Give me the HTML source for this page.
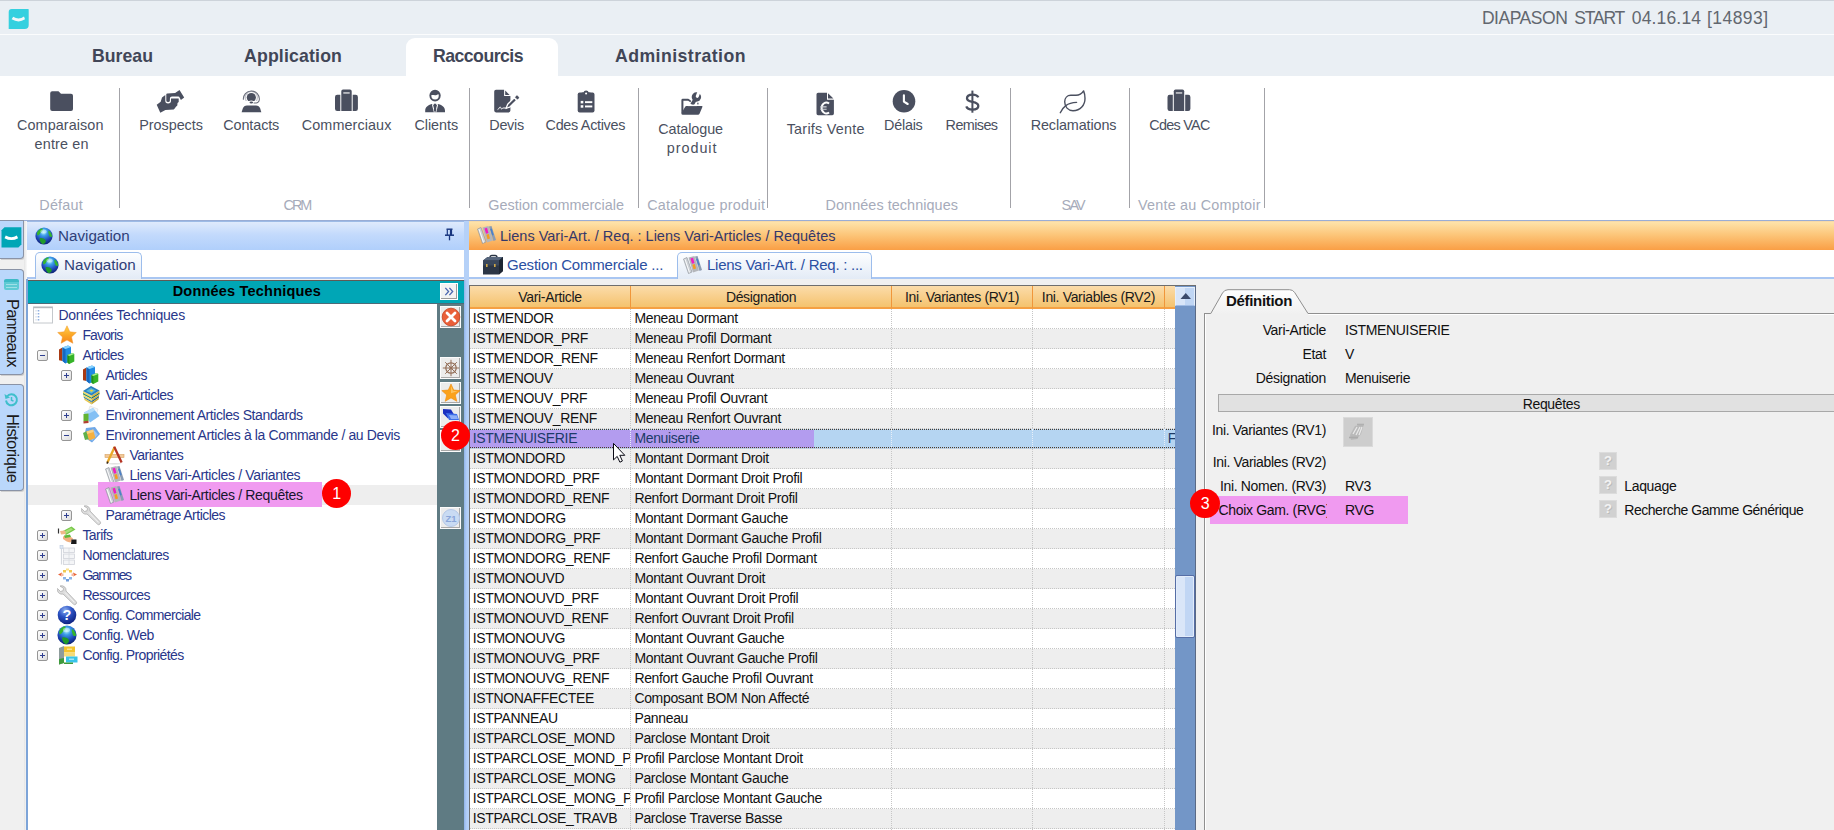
<!DOCTYPE html>
<html><head><meta charset="utf-8"><title>DIAPASON</title>
<style>
html,body{margin:0;padding:0;background:#f0f0f0;}
body{font-family:"Liberation Sans",sans-serif;}
#app{position:relative;width:1834px;height:830px;overflow:hidden;background:#f0f0f0;}
#app *{box-sizing:border-box;}
.abs{position:absolute;}
.t{position:absolute;white-space:nowrap;line-height:1;}
/* top */
.titlebar{left:0;top:0;width:1834px;height:35px;background:#eaeff4;border-top:1px solid #cdd3da;}
.wline{left:0;top:34px;width:1834px;height:1px;background:#fbfcfd;}
.tabbar{left:0;top:35px;width:1834px;height:41px;background:#eaeff4;}
.acttab{left:406px;top:38px;width:152px;height:38px;background:#fff;border-radius:9px 9px 0 0;}
.rtab{font-size:17.7px;font-weight:bold;color:#414657;top:47.600px;}
.apptitle{font-size:17.5px;color:#62676f;top:10px;}
.ribbon{left:0;top:76px;width:1834px;height:144px;background:#fff;}
.rline{left:0;top:220px;width:1834px;height:1px;background:#9aadd5;}
.rlab{font-size:14.4px;color:#4a5060;text-align:center;transform:translateX(-50%);line-height:19px;white-space:nowrap;}
.glab{font-size:14.4px;color:#a6abba;transform:translateX(-50%);top:198px;}
.sep{width:1px;background:#a3a3a8;top:88px;height:120px;}
.ico{position:absolute;}
/* left */
.sidetab{left:0;width:24px;background:#bad7fb;border:1px solid #8a93a6;border-left:none;border-radius:0 4px 4px 0;box-shadow:1px 1px 0 #d0d0d0;}
.vtext{position:absolute;white-space:nowrap;font-size:16.5px;color:#1a1a1a;transform-origin:0 0;transform:rotate(90deg);line-height:1;}
.navtitle{left:27px;top:221px;width:437px;height:29px;background:linear-gradient(#dfeafc,#c3dafc 45%,#b0cffb);border-top:1px solid #9dbbe6;}
.navtabs{left:27px;top:250px;width:437px;height:29px;background:#fff;border-bottom:2px solid #a9c6f2;}
.ntab{border:1px solid #9cbdec;border-bottom:none;border-radius:5px 5px 0 0;background:linear-gradient(#fdfeff,#e3ebf6);}
.hdrtxt{font-size:15.2px;color:#2f3f78;}
.teal{left:28px;top:280px;width:436px;height:24px;background:#00a6b6;border-top:1px solid #5f5a55;border-bottom:1px solid #4d6b78;}
.tree{left:28px;top:304px;width:409px;height:526px;background:#fff;}
.tbar{left:437px;top:304px;width:27px;height:526px;background:#5f7b83;}
.tb{left:440px;width:21px;height:22px;background:#ececec;border:1px solid #fbfbfb;box-shadow:inset -1px -1px 0 #a9a9a9;}
.nvb{background:#7da4d8;}
.ti{font-size:14px;letter-spacing:-0.34px;color:#28368a;}
.exp{width:11px;height:11px;border:1px solid #969696;background:linear-gradient(135deg,#fff,#dcdcdc);border-radius:2px;}
.exp:before{content:"";position:absolute;left:2px;top:4px;width:5px;height:1px;background:#2f3f90;}
.exp.p:after{content:"";position:absolute;left:4px;top:2px;width:1px;height:5px;background:#2f3f90;}
/* grid */
.gtitle{left:469px;top:221px;width:1365px;height:29px;background:linear-gradient(#fee3aa,#fcc67a 45%,#fa9f45);border-top:1px solid #f7d9a6;}
.gtabs{left:469px;top:250px;width:1368px;height:29px;background:#fff;border-bottom:2px solid #a9c6f2;}
.gt{font-size:15px;color:#2b4fa2;}
.grid{left:469px;top:285px;width:727px;height:545px;background:#fff;border-left:1px solid #6e6e6e;border-top:1px solid #6e6e6e;}
.gh{top:286px;height:23px;background:linear-gradient(#fbdcaa,#f8cf8c 50%,#f4c36e);border-right:1px solid #f0963a;border-bottom:2px solid #f5a043;font-size:14px;letter-spacing:-0.34px;color:#1a1a1a;text-align:center;line-height:23px;white-space:nowrap;overflow:hidden;}
.row{left:470px;width:705px;height:20px;border-bottom:1px dotted #c6c6c6;}
.row.g{background:#eeeeee;}
.c{position:absolute;top:0;height:19px;font-size:14px;letter-spacing:-0.34px;color:#111;line-height:19px;white-space:nowrap;overflow:hidden;padding-left:2.7px;border-right:1px dotted #c6c6c6;}
.c.c1{padding-left:3.4px;}
.row.sel{background:#b5d5f2;border-top:1px dotted #4a3c30;height:20px;}
.row.sel:after{content:"";position:absolute;left:0;top:17px;width:100%;height:0;border-top:1px dotted #4a3c30;}
.row.sel .c{top:-1px;color:#1c3a68;height:18px;}
.vsb{left:1175px;top:286px;width:21px;height:544px;background:#7396c7;border-right:1px solid #5a6a86;}
/* right */
.rp{left:1197px;top:279px;width:637px;height:551px;background:#f0f0f0;}
.fl{font-size:14px;letter-spacing:-0.34px;color:#111;}
.q{left:1599px;width:18px;height:18px;background:#d1d1d1;border:1px solid #dcdcdc;color:#f3f3f3;font-size:13px;text-align:center;line-height:16px;font-weight:bold;text-shadow:1px 1px 0 #bcbcbc;}
.red{border-radius:50%;background:#fe0000;color:#fff;text-align:center;font-size:16px;}

.rl{font-size:14.4px;color:#4a5060;}
.gl{font-size:14.4px;color:#a6abba;}

.row.sel .c:first-of-type{border-right-color:#e8a0f0;}

.row.sel .c{border-right-color:#e6eef8;}
.row.sel .c:first-of-type{border-right-color:#e8a0f0;}

</style></head>
<body>
<div id="app">
<div class="abs titlebar"></div><div class="abs tabbar"></div><div class="abs wline"></div>
<svg class="ico" style="left:8px;top:8px" width="22" height="22" viewBox="8 8 22 22"><path d="M11.700 8.900H28.200Q28.700 8.900 28.700 9.400V24.900Q28.700 28.900 24.700 28.900H8.700V11.900Q8.700 8.900 11.700 8.900Z" fill="#35d0df"/><path d="M13.200 16.800Q18.800 20.200 24 16.600L25 19.300Q18.800 23.500 11.600 19.300Z" fill="#f3f6f8"/></svg>
<div class="t apptitle" style="left:1481.9px;letter-spacing:-0.463px">DIAPASON</div>
<div class="t apptitle" style="left:1574.3px;letter-spacing:-1.213px">START</div>
<div class="t apptitle" style="left:1631.8px;letter-spacing:0.154px">04.16.14</div>
<div class="t apptitle" style="left:1707px;letter-spacing:0.435px">[14893]</div>
<div class="abs acttab"></div>
<div class="t rtab" style="left:92px;letter-spacing:0px">Bureau</div>
<div class="t rtab" style="left:244px;letter-spacing:0.16px">Application</div>
<div class="t rtab" style="left:433px;letter-spacing:-0.54px">Raccourcis</div>
<div class="t rtab" style="left:615px;letter-spacing:0.44px">Administration</div>
<div class="abs ribbon"></div><div class="abs rline"></div>
<div class="abs sep" style="left:119px"></div>
<div class="abs sep" style="left:469px"></div>
<div class="abs sep" style="left:638px"></div>
<div class="abs sep" style="left:767px"></div>
<div class="abs sep" style="left:1010px"></div>
<div class="abs sep" style="left:1129px"></div>
<div class="abs sep" style="left:1264px"></div>
<svg class="ico" style="left:0;top:76px" width="1834" height="143" viewBox="0 76 1834 143"><path fill="#4a4f5f" d="M52.200 91.300h6.300l2.500 2.500h10a2 2 0 0 1 2 2v13.300a2 2 0 0 1-2 2h-18.800a2 2 0 0 1-2-2v-15.800a2 2 0 0 1 2-2z"/>
<g fill="#4a4f5f"><path d="M166.300 94.300 Q166.300 93.500 167.300 93.400 L175.100 92.900 L179.500 90 L184.200 97.600 L180.900 99.900 L179.700 97.700 Q179.300 96.600 178.200 96.600 L172 96.600 Q169.900 96.600 169.900 98.600 L169.900 100.600 Q169.900 102.100 168.100 102.100 Q166.300 102.100 166.300 100.600 Z"/>
<path d="M156.700 104.800 L160.700 101.800 L162 97.600 L165.300 95 L165.300 100.800 Q165.300 103.400 168.100 103.400 Q171 103.400 171 100.800 L171 98.400 L178.700 98.500 L178.700 101.900 L177.500 103 L177.300 105.500 L175.700 106.900 L175.100 108 L173.700 109.500 L165.400 109.900 L160.300 112.700 Z"/></g>
<clipPath id="cc"><rect x="240" y="88" width="24" height="12.900"/></clipPath>
<circle cx="251.300" cy="97.500" r="6.100" fill="none" stroke="#c6c8cf" stroke-width="1.300" clip-path="url(#cc)"/>
<path d="M243.400 99.800 A8 8 0 1 1 259.300 99.800 C259.300 102.300 257 103.200 253.600 103" fill="none" stroke="#686c7a" stroke-width="1.050"/>
<circle cx="251.300" cy="97.500" r="4.600" fill="#4a4f5f" clip-path="url(#cc)"/>
<path d="M248.600 101.300 Q251.300 99.700 254 101.300 L254 101.500 L248.600 101.500Z" fill="#fff"/>
<ellipse cx="251.300" cy="102.600" rx="1.800" ry="1" fill="#4a4f5f"/>
<path fill="#4a4f5f" d="M241.600 112.300 L242.800 108.600 Q243.800 105.600 247 105.600 H256 Q259.200 105.600 260.200 108.600 L261.300 112.300 Z"/>
<g fill="#4a4f5f">
<path d="M341.3 111 V91.2 a1.700 1.700 0 0 1 1.700-1.700 h7 a1.700 1.700 0 0 1 1.700 1.700 V111z"/>
<path d="M337.2 94.700 H340.3 V111 H337.2 a2.200 2.200 0 0 1-2.200-2.200 V96.900 a2.200 2.200 0 0 1 2.200-2.200z"/>
<path d="M355.7 94.700 H352.7 V111 H355.7 a2.200 2.200 0 0 0 2.200-2.200 V96.900 a2.200 2.200 0 0 0-2.200-2.200z"/>
</g><rect x="343.3" y="92.300" width="6.400" height="1.300" fill="#fff" opacity=".85"/>
<clipPath id="hc"><ellipse cx="435.050" cy="95.600" rx="4.700" ry="4.850"/></clipPath>
<path clip-path="url(#hc)" fill="#4a4f5f" d="M429 88 H441 V95.400 C439.600 93.900 438 94.100 436.600 94.900 C434.800 95.800 432.600 94.400 431 95.300 L429 96 Z"/>
<ellipse cx="435.050" cy="95.600" rx="4.700" ry="4.850" fill="none" stroke="#4a4f5f" stroke-width="1.950"/>
<path fill="#4a4f5f" d="M425.200 112.300 v-1.600 c0-3.400 2.800-5.600 6.400-6.600 l2.400 1 h2.100 l2.400-1 c3.600 1 6.500 3.200 6.500 6.600 v1.600z"/>
<path d="M432.400 104.300 l2 8 M437.700 104.300 l-2 8" stroke="#fff" stroke-width="1.050" fill="none"/>
<path d="M433.900 103.800 h2.300 v1.300 l-0.500 0.600 0.600 4.200 -1.250 2.400 -1.250-2.400 0.600-4.200 -0.500-0.600z" fill="#4a4f5f"/>
<path fill="#4a4f5f" d="M496 89.800 h8.100 v6.300 h6.300 v14.500 a1.800 1.800 0 0 1-1.800 1.800 h-12.600 a1.800 1.800 0 0 1-1.800-1.800 v-19 a1.800 1.800 0 0 1 1.800-1.800z"/>
<path fill="#4a4f5f" d="M505.200 90.500 l4.400 4.500 h-4.400z"/>
<path d="M497.600 109.600 c1.300-0.200 1.600-2.600 2.500-2.600 s0.700 1.900 1.400 1.900 0.900-0.900 1.600-0.900 h2.800" stroke="#fff" stroke-width="1" fill="none"/>
<path d="M506 108.500 L507.690 104.330 L514.260 97.760 L516.740 100.240 L510.170 106.810 Z" fill="#4a4f5f" stroke="#fff" stroke-width="1.300" stroke-linejoin="round"/>
<path d="M514.830 97.190 L516.400 95.600 a0.800 0.800 0 0 1 1.100 0 L519 97.100 a0.800 0.800 0 0 1 0 1.100 L517.310 99.670 Z" fill="#4a4f5f" stroke="#fff" stroke-width=".4"/>
<rect x="577.700" y="92.500" width="16.800" height="20" rx="1.900" fill="#4a4f5f"/>
<path fill="#4a4f5f" d="M581.800 94.500 v-2 h1.600 a2.800 2.800 0 0 1 5.400 0 h1.600 v2z"/>
<circle cx="586.100" cy="93.500" r="1.050" fill="#fff"/>
<g fill="#fff"><rect x="580.700" y="100.900" width="2.600" height="2.500"/><rect x="585" y="101.200" width="7.300" height="1.900"/><rect x="580.700" y="105.200" width="2.600" height="2.500"/><rect x="585" y="105.500" width="7.300" height="1.900"/></g>
<path fill="#4a4f5f" d="M681.400 113.300 V100.200 a1.400 1.400 0 0 1 1.400-1.400 h5.400 q0.500 0 0.900 0.350 l2 1.700 v1.900 l-3-1.950 h-4.700 v10.400 l-2 2.300z"/>
<path fill="#4a4f5f" d="M686.300 106.100 h15.500 q1 0 0.600 0.900 l-3 7 q-0.400 0.800-1.300 0.800 h-15.300 q-1.400 0-1.400-1.500 l3.800-6.500 q0.400-0.700 1.100-0.700z"/>
<path d="M695.500 98.800 L692.100 104.600" stroke="#fff" stroke-width="5.200" fill="none"/>
<path d="M695.500 98.800 L692 104.700" stroke="#4a4f5f" stroke-width="3.700" fill="none"/>
<rect x="688" y="104.600" width="9" height="1.500" fill="#fff"/>
<circle cx="696.400" cy="97" r="4.700" fill="#4a4f5f"/>
<path d="M697.300 96.300 L699.600 90.300" stroke="#fff" stroke-width="3.100" stroke-linecap="round" fill="none"/>
<rect x="697" y="102.700" width="1.700" height="1.700" fill="#7d818d"/>
<path fill="#4a4f5f" d="M818.100 92.700 h8.900 v7 h6.900 v13.900 a1.600 1.600 0 0 1-1.600 1.600 h-14.200 a1.600 1.600 0 0 1-1.600-1.600 v-19.300 a1.600 1.600 0 0 1 1.600-1.600z"/>
<path fill="#4a4f5f" d="M828 93.200 l5.400 5.400 h-5.400z"/>
<path d="M829.100 103.600 C827.600 102.500 825.600 102.300 824.100 103.300 C822.100 104.600 821.600 106.500 821.600 108.050 C821.600 109.600 822.100 111.500 824.100 112.800 C825.600 113.800 827.600 113.600 829.100 112.500" fill="none" stroke="#fff" stroke-width="1.900"/><path d="M820.400 106.900 h6.200 M820.400 109.300 h6.200" stroke="#d4d6db" stroke-width="1.100"/>
<circle cx="904" cy="101.200" r="11.300" fill="#4a4f5f"/><path d="M903.900 95.300 V101.600 L907.700 104" stroke="#fff" stroke-width="2.100" fill="none" stroke-linecap="round" stroke-linejoin="round"/>
<g fill="none" stroke="#4a4f5f"><path stroke-width="2.300" d="M978.300 97.400 C977.500 95.400 975.300 94.600 972.500 94.600 C969.300 94.600 967 96 967 98.300 C967 100.600 969 101.300 972.400 101.900 C976 102.500 978.300 103.400 978.300 106 C978.300 108.300 976 109.600 972.500 109.600 C969.300 109.600 967 108.600 966.300 106.400"/><path stroke-width="2" d="M972.400 90.600 V112.700"/></g>
<g fill="none" stroke="#4a4f5f" stroke-width="1.400" stroke-linecap="round" stroke-linejoin="round"><path d="M1083.600 90.900 C1082 93.500 1079.500 95.300 1076 95.300 L1070.800 95.300 C1067.200 95.300 1064.700 98 1064.700 101.800 C1064.700 106.800 1068 110.700 1073 110.700 C1080.500 110.700 1085 105 1085 98.500 C1085 95.500 1084.500 93 1083.600 90.900 Z"/><path d="M1060.300 112.700 C1061.800 109.500 1063.500 107.300 1065.800 105.600 C1068.500 103.600 1071.500 102.600 1076.600 102.400"/></g>
<g fill="#4a4f5f">
<path d="M1173.8 111 V91.2 a1.700 1.700 0 0 1 1.700-1.700 h7 a1.700 1.700 0 0 1 1.700 1.700 V111z"/>
<path d="M1169.7 94.700 H1172.8 V111 H1169.7 a2.200 2.200 0 0 1-2.200-2.200 V96.900 a2.200 2.200 0 0 1 2.200-2.200z"/>
<path d="M1188.2 94.700 H1185.2 V111 H1188.2 a2.200 2.200 0 0 0 2.200-2.200 V96.900 a2.200 2.200 0 0 0-2.200-2.200z"/>
</g><rect x="1175.8" y="92.300" width="6.400" height="1.300" fill="#fff" opacity=".85"/></svg>
<div class="t rl" style="left:17px;top:118px;letter-spacing:0.081px">Comparaison</div>
<div class="t rl" style="left:34.6px;top:137px;letter-spacing:0.155px">entre en</div>
<div class="t rl" style="left:139.3px;top:118px;letter-spacing:-0.05px">Prospects</div>
<div class="t rl" style="left:223.3px;top:118px;letter-spacing:-0.114px">Contacts</div>
<div class="t rl" style="left:301.8px;top:118px;letter-spacing:0.083px">Commerciaux</div>
<div class="t rl" style="left:414.4px;top:118px;letter-spacing:-0.05px">Clients</div>
<div class="t rl" style="left:489.3px;top:118px;letter-spacing:-0.296px">Devis</div>
<div class="t rl" style="left:545.6px;top:118px;letter-spacing:-0.308px">Cdes Actives</div>
<div class="t rl" style="left:658.2px;top:122px;letter-spacing:-0.089px">Catalogue</div>
<div class="t rl" style="left:666.8px;top:141px;letter-spacing:0.947px">produit</div>
<div class="t rl" style="left:786.7px;top:122px;letter-spacing:0.236px">Tarifs Vente</div>
<div class="t rl" style="left:884.1px;top:118px;letter-spacing:-0.26px">Délais</div>
<div class="t rl" style="left:945.6px;top:118px;letter-spacing:-0.597px">Remises</div>
<div class="t rl" style="left:1030.7px;top:118px;letter-spacing:-0.126px">Reclamations</div>
<div class="t rl" style="left:1149.3px;top:118px;letter-spacing:-0.732px">Cdes VAC</div>
<div class="t gl" style="left:39.3px;top:198px;letter-spacing:0.199px">Défaut</div>
<div class="t gl" style="left:283.5px;top:198px;letter-spacing:-1.991px">CRM</div>
<div class="t gl" style="left:488.3px;top:198px;letter-spacing:0.035px">Gestion commerciale</div>
<div class="t gl" style="left:647.2px;top:198px;letter-spacing:0.262px">Catalogue produit</div>
<div class="t gl" style="left:825.6px;top:198px;letter-spacing:0.064px">Données techniques</div>
<div class="t gl" style="left:1061.6px;top:198px;letter-spacing:-1.817px">SAV</div>
<div class="t gl" style="left:1138px;top:198px;letter-spacing:0.206px">Vente au Comptoir</div>
<div class="abs sidetab" style="top:220px;height:39px;border-radius:0 0 4px 0"></div>
<svg class="ico" style="left:1px;top:227px" width="21" height="21" viewBox="1 227 21 21"><path d="M4.500 227.300H21.400V244.500L18.400 247.500H1.500V230.300Z" fill="#00a6b6"/><path d="M5.800 235.600Q11.500 238.800 16.800 235.500L18.100 238.200Q11.500 242 4.500 238.200Z" fill="#fff"/></svg>
<div class="abs sidetab" style="top:269px;height:106px"></div>
<div class="abs" style="left:4px;top:279px;width:15px;height:11px;background:#5fcad4;border-radius:2px;border-top:3px solid #3dbac6"></div><div class="abs" style="left:6px;top:284px;width:11px;height:1px;background:#9fe0e6;box-shadow:0 3px 0 #9fe0e6"></div>
<div class="vtext" style="left:20.700px;top:298.500px;letter-spacing:-0.833px">Panneaux</div>
<div class="abs sidetab" style="top:384px;height:107px"></div>
<svg class="ico" style="left:4px;top:392px" width="15" height="15" viewBox="0 0 15 15"><path d="M3 4.500a5.500 5.500 0 1 1-1 4" fill="none" stroke="#3fbfcc" stroke-width="2"/><path d="M0.500 2l1 5 4.500-1.500z" fill="#3fbfcc"/><path d="M7.500 5v3.200l2 1" stroke="#3fbfcc" stroke-width="1.500" fill="none"/></svg>
<div class="vtext" style="left:20.700px;top:413.500px;letter-spacing:-0.589px">Historique</div>
<div class="abs" style="left:24px;top:221px;width:3px;height:609px;background:linear-gradient(90deg,#e4e4e4,#fafafa)"></div><div class="abs nvb" style="left:26px;top:279px;width:2px;height:551px"></div>
<div class="abs navtitle"></div>
<svg class="ico" style="left:35px;top:227px" width="18" height="18" viewBox="0 0 18 18"><defs><radialGradient id="gg1" cx="48%" cy="28%" r="72%"><stop offset="0" stop-color="#b8f4ff"/><stop offset=".3" stop-color="#3a9be8"/><stop offset=".7" stop-color="#1d43b4"/><stop offset="1" stop-color="#0b1f6c"/></radialGradient></defs><circle cx="9" cy="9" r="8.600" fill="url(#gg1)"/><path d="M1.800 6.500 C2.500 3.500 5 1.500 7.500 1.200 C8 3 7.500 4 6 5 C5 6.500 4.500 8 2.500 8.500 Z" fill="#35b52e"/><path d="M13.500 3.500 C15.500 4.500 17 7 17.200 9.500 C16 10.500 14.500 10 14 8 C13.500 6.500 13 5 13.500 3.500Z" fill="#35b52e"/><path d="M4.500 11.500 C6.500 10.500 9 11.500 10.500 13 C11.500 14.500 10 16.500 8 17.300 C6 16.500 4.500 14 4.500 11.500Z" fill="#1f9a2a"/><ellipse cx="8.500" cy="4.500" rx="3.200" ry="2" fill="#e8ffff" opacity=".45"/></svg>
<div class="t hdrtxt" style="left:58px;top:228px">Navigation</div>
<svg class="ico" style="left:444px;top:228px" width="11" height="13" viewBox="0 0 11 13"><path d="M2.500 1.200h6" stroke="#17357f" stroke-width="1.400"/><path d="M3.300 1.500v5.500" stroke="#17357f" stroke-width="1.200"/><path d="M7 1.500v5.500" stroke="#17357f" stroke-width="2.200"/><path d="M1 7.200h9" stroke="#17357f" stroke-width="1.500"/><path d="M5.500 8v4.300" stroke="#17357f" stroke-width="1.300"/></svg>
<div class="abs navtabs"></div>
<div class="abs ntab" style="left:35px;top:252px;width:107px;height:27px"></div>
<svg class="ico" style="left:41px;top:256px" width="18" height="18" viewBox="0 0 18 18"><defs><radialGradient id="gg2" cx="48%" cy="28%" r="72%"><stop offset="0" stop-color="#b8f4ff"/><stop offset=".3" stop-color="#3a9be8"/><stop offset=".7" stop-color="#1d43b4"/><stop offset="1" stop-color="#0b1f6c"/></radialGradient></defs><circle cx="9" cy="9" r="8.600" fill="url(#gg2)"/><path d="M1.800 6.500 C2.500 3.500 5 1.500 7.500 1.200 C8 3 7.500 4 6 5 C5 6.500 4.500 8 2.500 8.500 Z" fill="#35b52e"/><path d="M13.500 3.500 C15.500 4.500 17 7 17.200 9.500 C16 10.500 14.500 10 14 8 C13.500 6.500 13 5 13.500 3.500Z" fill="#35b52e"/><path d="M4.500 11.500 C6.500 10.500 9 11.500 10.500 13 C11.500 14.500 10 16.500 8 17.300 C6 16.500 4.500 14 4.500 11.500Z" fill="#1f9a2a"/><ellipse cx="8.500" cy="4.500" rx="3.200" ry="2" fill="#e8ffff" opacity=".45"/></svg>
<div class="t hdrtxt" style="left:64px;top:257px">Navigation</div>
<div class="abs teal"></div>
<div class="t" style="left:172.700px;top:284px;font-weight:bold;font-size:14.500px;color:#000;letter-spacing:0.202px">Données Techniques</div>
<div class="abs" style="left:440px;top:283px;width:18px;height:17px;background:#f2f2f2;border:1px solid #fff;box-shadow:inset -1px -1px 0 #9a9a9a"></div>
<svg class="ico" style="left:444px;top:287px" width="10" height="9" viewBox="0 0 12 11"><path d="M1.500 1l4 4.500-4 4.500M6.500 1l4 4.500-4 4.500" stroke="#4a66b0" stroke-width="1.600" fill="none"/></svg>
<div class="abs tree"></div><div class="abs tbar"></div>
<div class="abs" style="left:464px;top:221px;width:5px;height:609px;background:#b5d1f8"></div><div class="abs" style="left:464px;top:280px;width:5px;height:550px;background:linear-gradient(90deg,#8fb3e8,#aecbf5 45%,#b8d4f9)"></div>
<svg class="ico" style="left:33px;top:306px" width="20" height="18" viewBox="0 0 20 18"><rect x=".5" y="1" width="19" height="16" fill="#fff" stroke="#c4c8cc"/><path d="M.5 1.500h19" stroke="#b4b8bc" stroke-width="1.400"/><path d="M5.500 4v11" stroke="#8fb0e0" stroke-width="1.600" stroke-dasharray="1.600 1.400"/><path d="M3 4v11" stroke="#d0d8e4" stroke-width="1" stroke-dasharray="1.600 1.400"/></svg>
<div class="t ti" style="left:58.4px;top:307.5px;letter-spacing:-0.219px">Données Techniques</div>
<svg class="ico" style="left:57px;top:325px" width="20" height="20" viewBox="0 0 20 20"><defs><linearGradient id="sg" x1="0" y1="0" x2="0" y2="1"><stop offset="0" stop-color="#ffd24a"/><stop offset=".55" stop-color="#fba524"/><stop offset="1" stop-color="#f5841a"/></linearGradient></defs><path d="M10 0.800l2.800 6 6.500 0.700-4.800 4.400 1.400 6.400-5.900-3.300-5.900 3.300 1.400-6.400-4.800-4.400 6.500-0.700z" fill="url(#sg)" stroke="#f0952a" stroke-width=".5"/></svg>
<div class="t ti" style="left:82.4px;top:327.5px;letter-spacing:-0.851px">Favoris</div>
<div class="abs exp " style="left:37px;top:350px"></div>
<svg class="ico" style="left:57px;top:345px" width="20" height="20" viewBox="0 0 20 20"><path d="M2 4.500L5.500 2.500V16L2 15.200z" fill="#a83a14"/><path d="M5.500 2.500L11 0.500L14 2V15.500L8.500 18.500L5.500 16z" fill="#1f8ae4"/><path d="M5.500 2.500L8.500 4V18.500L5.500 16z" fill="#1568c0"/><path d="M5.500 2.500L11 0.500L14 2L8.500 4z" fill="#8ad4ff"/><path d="M10.500 10L15.500 8L17.300 9V16.500L12.300 19L10.500 17.800z" fill="#36b428"/><path d="M10.500 10L12.300 11V19L10.500 17.800z" fill="#23901c"/><path d="M10.500 10L15.500 8L17.300 9L12.300 11z" fill="#a4ec92"/></svg>
<div class="t ti" style="left:82.4px;top:347.5px;letter-spacing:-0.615px">Articles</div>
<div class="abs exp p" style="left:61px;top:370px"></div>
<svg class="ico" style="left:81px;top:365px" width="20" height="20" viewBox="0 0 20 20"><path d="M2 4.500L5.500 2.500V16L2 15.200z" fill="#a83a14"/><path d="M5.500 2.500L11 0.500L14 2V15.500L8.500 18.500L5.500 16z" fill="#1f8ae4"/><path d="M5.500 2.500L8.500 4V18.500L5.500 16z" fill="#1568c0"/><path d="M5.500 2.500L11 0.500L14 2L8.500 4z" fill="#8ad4ff"/><path d="M10.500 10L15.500 8L17.300 9V16.500L12.300 19L10.500 17.800z" fill="#36b428"/><path d="M10.500 10L12.300 11V19L10.500 17.800z" fill="#23901c"/><path d="M10.500 10L15.500 8L17.300 9L12.300 11z" fill="#a4ec92"/></svg>
<div class="t ti" style="left:105.4px;top:367.5px;letter-spacing:-0.558px">Articles</div>
<svg class="ico" style="left:81px;top:385px" width="20" height="20" viewBox="0 0 20 20"><path d="M2 6L10.500 10.500V12.500L2 8z" fill="#f2dc68"/><path d="M2 8L10.500 12.500V14L2 9.500z" fill="#2f8f6f"/><path d="M2 9.500L10.500 14V16L2.500 11.500z" fill="#f2dc68"/><path d="M2.500 11.500L10.500 16V17.500L3 13z" fill="#2f7fa8"/><path d="M3 13L10.500 17.500V19.500L3.500 15z" fill="#e8c850"/><path d="M10.500 10.500L18.500 5.500V7.500L10.500 12.500z" fill="#d8b840"/><path d="M10.500 12.500L18.500 7.500V9L10.500 14z" fill="#1f6f5f"/><path d="M10.500 14L18.500 9L18 11L10.500 16z" fill="#d8b840"/><path d="M10.500 16L18 11V12.500L10.500 17.500z" fill="#1f5f8f"/><path d="M10.500 17.500L18 12.500L17.500 14.500L10.500 19.500z" fill="#c8a830"/><path d="M2 6L10 1L18.500 5.500L10.500 10.500z" fill="#2a7fc0"/><path d="M5 6L10 3L15 5.500L10.300 8.500z" fill="#58b8d8"/><path d="M8.500 5.600L10.500 4.400L12.500 5.600L10.500 6.900z" fill="#e8d040"/></svg>
<div class="t ti" style="left:105.4px;top:387.5px;letter-spacing:-0.527px">Vari-Articles</div>
<div class="abs exp p" style="left:61px;top:410px"></div>
<svg class="ico" style="left:81px;top:405px" width="20" height="20" viewBox="0 0 20 20"><path d="M9 1L17 4L14 14L6 11z" fill="#f6f6f6" stroke="#dcdcdc" stroke-width=".6"/><path d="M3 7.500L12 3L18.500 11L9 17.500z" fill="#84c0f4"/><path d="M3 7.500L12 3L14 5.500L5 10z" fill="#b4dcfa"/><path d="M2.500 9L7.500 8.500V16L2.500 16.500z" fill="#62b432"/><path d="M2.500 16.200L7.500 15.700V18L2.500 18.500z" fill="#b04030"/></svg>
<div class="t ti" style="left:105.4px;top:407.5px;letter-spacing:-0.426px">Environnement Articles Standards</div>
<div class="abs exp " style="left:61px;top:430px"></div>
<svg class="ico" style="left:81px;top:425px" width="20" height="20" viewBox="0 0 20 20"><path d="M5 3L14 2L19 9L11 17.500L3 12z" fill="#6fa8e8"/><path d="M12 4L17 9.500L11 16L9 12z" fill="#9cc4f2"/><path d="M2 8L6 6L8 14L4 15z" fill="#5fb04a"/><path d="M5.500 6.500L12 4.500L14.500 13L8 15.500z" fill="#f5b040"/><path d="M5.500 6.500L12 4.500L12.700 7L6.200 9z" fill="#fad080"/></svg>
<div class="t ti" style="left:105.4px;top:427.5px;letter-spacing:-0.373px">Environnement Articles à la Commande / au Devis</div>
<svg class="ico" style="left:104px;top:445px" width="21" height="20" viewBox="0 0 21 20"><rect x="1" y="9.500" width="19" height="3" fill="#f2c898" stroke="#d8a060" stroke-width=".6"/><path d="M10.800 1.800L3.400 17.500" stroke="#eaa828" stroke-width="2.300"/><path d="M3.800 16.600L3 18.600" stroke="#3a2a1a" stroke-width="1.600"/><path d="M10.200 1.800L17.600 17.500" stroke="#b43424" stroke-width="2.300"/><ellipse cx="10.500" cy="18.800" rx="7" ry=".8" fill="#ccc" opacity=".6"/></svg>
<div class="t ti" style="left:129.4px;top:447.5px;letter-spacing:-0.476px">Variantes</div>
<svg class="ico" style="left:104px;top:465px" width="21" height="20" viewBox="0 0 21 20"><path d="M1.500 4L5 2.500L10 17L6.500 18.500z" fill="#cdd1d6" stroke="#8a8e96" stroke-width=".6"/><path d="M3 4.200L7.500 17.500" stroke="#fff" stroke-width=".9"/><path d="M6.500 2.500L12.500 1L17 15.500L11 17.500z" fill="#b4b6ba"/><path d="M8.500 3.500L11 2.800L12.500 8L10 8.800z" fill="#f21cc0"/><path d="M10.300 9.800L12.800 9L14 13.500L11.500 14.300z" fill="#f79a20"/><path d="M13 1.500L15.500 1L20 15L17.500 16z" fill="#8c9cb2"/><path d="M14.200 4L15.700 3.500L17.700 10L16.200 10.500z" fill="#4a80ca"/></svg>
<div class="t ti" style="left:129.4px;top:467.5px;letter-spacing:-0.345px">Liens Vari-Articles / Variantes</div>
<div class="abs" style="left:28px;top:485px;width:409px;height:20px;background:#eeeeee"></div>
<div class="abs" style="left:98px;top:482px;width:224px;height:24.500px;background:#f09af0"></div>
<svg class="ico" style="left:104px;top:485px" width="21" height="20" viewBox="0 0 21 20"><path d="M1.500 4L5 2.500L10 17L6.500 18.500z" fill="#cdd1d6" stroke="#8a8e96" stroke-width=".6"/><path d="M3 4.200L7.500 17.500" stroke="#fff" stroke-width=".9"/><path d="M6.500 2.500L12.500 1L17 15.500L11 17.500z" fill="#b4b6ba"/><path d="M8.500 3.500L11 2.800L12.500 8L10 8.800z" fill="#f21cc0"/><path d="M10.300 9.800L12.800 9L14 13.500L11.500 14.300z" fill="#f79a20"/><path d="M13 1.500L15.500 1L20 15L17.500 16z" fill="#8c9cb2"/><path d="M14.200 4L15.700 3.500L17.700 10L16.200 10.500z" fill="#4a80ca"/></svg>
<div class="t ti" style="left:129.4px;top:487.5px;letter-spacing:-0.341px;color:#16162e">Liens Vari-Articles / Requêtes</div>
<div class="abs exp p" style="left:61px;top:510px"></div>
<svg class="ico" style="left:81px;top:505px" width="22" height="21" viewBox="0 0 22 21"><path d="M3 1a4.500 4.500 0 0 1 6 5l10 10.500a1.800 1.800 0 0 1-2.600 2.600l-10.400-10.100a4.500 4.500 0 0 1-5.500-5.500l3 3 2.500-0.700 0.600-2.400z" fill="#dcdcdc" stroke="#a6a6a6" stroke-width=".7"/><path d="M8 7.500l9.500 9.800" stroke="#f6f6f6" stroke-width="1"/></svg>
<div class="t ti" style="left:105.4px;top:507.5px;letter-spacing:-0.513px">Paramétrage Articles</div>
<div class="abs exp p" style="left:37px;top:530px"></div>
<svg class="ico" style="left:57px;top:525px" width="21" height="20" viewBox="0 0 21 20"><path d="M1.500 3.500v5" stroke="#333" stroke-width="1.200"/><path d="M5 6.500L14.500 1.500L18.500 4.500L9 10z" fill="#78c84a"/><path d="M7 6.800L14 3L16 4.500L9 8.500z" fill="#a8e07a"/><path d="M3 6L8 5.500L9 9L4 9.500z" fill="#f0b888"/><path d="M6 11.500C9 10 13 11 16 13.500L13.500 17.500C10 17 8 15.500 6 14z" fill="#f0b080"/><path d="M7 10.500L13 9.500L14 12L8 13z" fill="#5fb83a"/><path d="M14.500 14.500L19.500 14.500V19H14z" fill="#1a1a1a"/></svg>
<div class="t ti" style="left:82.4px;top:527.5px;letter-spacing:-0.571px">Tarifs</div>
<div class="abs exp p" style="left:37px;top:550px"></div>
<svg class="ico" style="left:57px;top:545px" width="20" height="21" viewBox="0 0 20 21"><rect x="3" y="0.500" width="3" height="3" fill="#dfe8f4" stroke="#b8c8dc" stroke-width=".6"/><path d="M4.500 3.500v16" stroke="#d4d8de" stroke-width="1.200"/><g fill="#f4f5f7" stroke="#d0d3d9" stroke-width=".8"><rect x="6.500" y="3" width="11" height="4.500"/><rect x="6.500" y="9" width="11" height="4.500"/><rect x="6.500" y="15" width="11" height="4.500"/></g><path d="M12 3v16.500" stroke="#d8dbe0" stroke-width=".8"/></svg>
<div class="t ti" style="left:82.4px;top:547.5px;letter-spacing:-0.605px">Nomenclatures</div>
<div class="abs exp p" style="left:37px;top:570px"></div>
<svg class="ico" style="left:57px;top:565px" width="21" height="20" viewBox="0 0 21 20"><path d="M1 9.500l4-2v4z" fill="#e8643a"/><path d="M20 9.500l-4-2v4z" fill="#e8643a"/><rect x="6" y="5" width="3" height="2.500" fill="#f0c850"/><rect x="12" y="5" width="3" height="2.500" fill="#f0c850"/><rect x="4" y="8.500" width="2.500" height="2.500" fill="#f4b8a0"/><rect x="14.500" y="8.500" width="2.500" height="2.500" fill="#f4b8a0"/><rect x="6" y="12" width="3" height="2.500" fill="#8cb4e8"/><rect x="12" y="12" width="3" height="2.500" fill="#8cb4e8"/><rect x="9" y="14" width="3" height="2.500" fill="#6f9cdc"/><rect x="9" y="3.500" width="3" height="2" fill="#f8e090"/></svg>
<div class="t ti" style="left:82.4px;top:567.5px;letter-spacing:-1.439px">Gammes</div>
<div class="abs exp p" style="left:37px;top:590px"></div>
<svg class="ico" style="left:57px;top:585px" width="22" height="21" viewBox="0 0 22 21"><path d="M3 1a4.500 4.500 0 0 1 6 5l10 10.500a1.800 1.800 0 0 1-2.600 2.600l-10.400-10.100a4.500 4.500 0 0 1-5.500-5.500l3 3 2.500-0.700 0.600-2.400z" fill="#dcdcdc" stroke="#a6a6a6" stroke-width=".7"/><path d="M8 7.500l9.500 9.800" stroke="#f6f6f6" stroke-width="1"/></svg>
<div class="t ti" style="left:82.4px;top:587.5px;letter-spacing:-0.647px">Ressources</div>
<div class="abs exp p" style="left:37px;top:610px"></div>
<svg class="ico" style="left:57px;top:605px" width="20" height="20" viewBox="0 0 20 20"><defs><radialGradient id="hg" cx="40%" cy="25%" r="80%"><stop offset="0" stop-color="#8fb0f0"/><stop offset=".45" stop-color="#2a52c4"/><stop offset="1" stop-color="#0c1c78"/></radialGradient></defs><circle cx="10" cy="10" r="9.300" fill="url(#hg)"/><text x="10" y="15.300" font-family="Liberation Sans" font-weight="bold" font-size="14.500" fill="#fff" text-anchor="middle">?</text></svg>
<div class="t ti" style="left:82.4px;top:607.5px;letter-spacing:-0.668px">Config. Commerciale</div>
<div class="abs exp p" style="left:37px;top:630px"></div>
<svg class="ico" style="left:57px;top:625px" width="20" height="20" viewBox="0 0 18 18"><defs><radialGradient id="gg3" cx="48%" cy="28%" r="72%"><stop offset="0" stop-color="#b8f4ff"/><stop offset=".3" stop-color="#3a9be8"/><stop offset=".7" stop-color="#1d43b4"/><stop offset="1" stop-color="#0b1f6c"/></radialGradient></defs><circle cx="9" cy="9" r="8.600" fill="url(#gg3)"/><path d="M1.800 6.500 C2.500 3.500 5 1.500 7.500 1.200 C8 3 7.500 4 6 5 C5 6.500 4.500 8 2.500 8.500 Z" fill="#35b52e"/><path d="M13.500 3.500 C15.500 4.500 17 7 17.200 9.500 C16 10.500 14.500 10 14 8 C13.500 6.500 13 5 13.500 3.500Z" fill="#35b52e"/><path d="M4.500 11.500 C6.500 10.500 9 11.500 10.500 13 C11.500 14.500 10 16.500 8 17.300 C6 16.500 4.500 14 4.500 11.500Z" fill="#1f9a2a"/><ellipse cx="8.500" cy="4.500" rx="3.200" ry="2" fill="#e8ffff" opacity=".45"/></svg>
<div class="t ti" style="left:82.4px;top:627.5px;letter-spacing:-0.478px">Config. Web</div>
<div class="abs exp p" style="left:37px;top:650px"></div>
<svg class="ico" style="left:57px;top:645px" width="21" height="20" viewBox="0 0 21 20"><path d="M2 3l5-2v17l-5 1.500z" fill="#8e9c9c"/><path d="M2 14l5-1v5l-5 1.500z" fill="#3f9a3c"/><rect x="7" y="1.500" width="11" height="6" fill="#f4c42c"/><rect x="10" y="3.500" width="5" height="1.500" fill="#fae48a"/><rect x="7" y="7.500" width="11" height="4" fill="#f6dc78"/><rect x="9" y="11.500" width="11.500" height="6" fill="#38c4ea"/><rect x="12" y="13.500" width="5" height="1.500" fill="#a0e6f8"/><path d="M7 17.500h9v1.500h-9z" fill="#3f9a3c"/></svg>
<div class="t ti" style="left:82.4px;top:647.5px;letter-spacing:-0.604px">Config. Propriétés</div>
<div class="abs tb" style="top:306px"></div>
<svg class="ico" style="left:441px;top:307px" width="20" height="20" viewBox="0 0 20 20"><circle cx="10" cy="10" r="8.800" fill="#e9603a" stroke="#c8431f" stroke-width=".8"/><path d="M6 6l8 8M14 6l-8 8" stroke="#fff" stroke-width="2.800" stroke-linecap="round"/></svg>
<div class="abs tb" style="top:357px"></div>
<svg class="ico" style="left:441px;top:358px" width="20" height="20" viewBox="0 0 20 20"><g stroke="#94705a" fill="none"><circle cx="10" cy="10" r="5.200" stroke-width="1.300"/><path d="M10 1.800v16.400M1.800 10h16.400M4.200 4.200l11.600 11.600M15.800 4.200l-11.600 11.600" stroke-width="1"/></g><circle cx="10" cy="10" r="1.600" fill="#94705a"/></svg>
<div class="abs tb" style="top:382px"></div>
<svg class="ico" style="left:441px;top:383px" width="20" height="20" viewBox="0 0 20 20"><path d="M10 1l2.700 6 6.500 0.600-4.900 4.300 1.500 6.400-5.800-3.400-5.800 3.400 1.500-6.400-4.900-4.300 6.500-0.600z" fill="#fba21c" stroke="#f08a0a" stroke-width=".6"/><path d="M10 3l2 4.800 4.500 0.400-6.500 2z" fill="#ffd27a" opacity=".7"/></svg>
<div class="abs tb" style="top:406px"></div>
<svg class="ico" style="left:441px;top:407px" width="20" height="20" viewBox="0 0 20 20"><path d="M2 2l8 0.500 3 5 -6 4-5-5z" fill="#1a2fc0"/><path d="M5 6l11 1 2 6-10 0z" fill="#3f6fe8"/><path d="M8 8l8 0.500 1 3.500-7 0z" fill="#8fb0f8"/></svg>
<div class="abs tb" style="top:430px"></div>

<div class="abs tb" style="top:507px"></div>
<svg class="ico" style="left:441px;top:508px" width="20" height="20" viewBox="0 0 20 20"><circle cx="10" cy="10" r="8.500" fill="#c9dbf3" stroke="#b4c8e8"/><text x="10" y="13.800" font-family="Liberation Sans" font-weight="bold" font-size="9.500" fill="#8aa6da" text-anchor="middle">Z1</text></svg>
<div class="abs gtitle"></div>
<svg class="ico" style="left:476px;top:225px" width="21" height="20" viewBox="0 0 21 20"><path d="M1.500 4L5 2.500L10 17L6.500 18.500z" fill="#cdd1d6" stroke="#8a8e96" stroke-width=".6"/><path d="M3 4.200L7.500 17.500" stroke="#fff" stroke-width=".9"/><path d="M6.500 2.500L12.500 1L17 15.500L11 17.500z" fill="#b4b6ba"/><path d="M8.500 3.500L11 2.800L12.500 8L10 8.800z" fill="#f21cc0"/><path d="M10.300 9.800L12.800 9L14 13.500L11.500 14.300z" fill="#f79a20"/><path d="M13 1.500L15.500 1L20 15L17.500 16z" fill="#8c9cb2"/><path d="M14.200 4L15.700 3.500L17.700 10L16.200 10.500z" fill="#4a80ca"/></svg>
<div class="t" style="left:500px;top:229px;font-size:14.500px;color:#34386a">Liens Vari-Art. / Req. : Liens Vari-Articles / Requêtes</div>
<div class="abs gtabs"></div>
<div class="abs ntab" style="left:677px;top:252px;width:195px;height:27px"></div>
<svg class="ico" style="left:482px;top:254px" width="22" height="21" viewBox="0 0 22 21"><path d="M8 3.500q0-2 2-2h3q2 0 2 2" fill="none" stroke="#2a3444" stroke-width="1.400"/><path d="M1 6.500L5.500 3H21V17L17 20.500H1z" fill="#2c3646"/><path d="M1 6.500L5.500 3H21L17 6.500z" fill="#56657c"/><path d="M17 6.500L21 3V17L17 20.500z" fill="#1e2633"/><path d="M1 6.500H17V11.500H1z" fill="#3a475b"/><rect x="4" y="10" width="1.600" height="3" fill="#d0a848"/><rect x="12" y="10" width="1.600" height="3" fill="#d0a848"/></svg>
<div class="t gt" style="left:507px;top:257px;letter-spacing:-0.204px">Gestion Commerciale ...</div>
<svg class="ico" style="left:682px;top:255px" width="21" height="20" viewBox="0 0 21 20"><path d="M1.500 4L5 2.500L10 17L6.500 18.500z" fill="#cdd1d6" stroke="#8a8e96" stroke-width=".6"/><path d="M3 4.200L7.500 17.500" stroke="#fff" stroke-width=".9"/><path d="M6.500 2.500L12.500 1L17 15.500L11 17.500z" fill="#b4b6ba"/><path d="M8.500 3.500L11 2.800L12.500 8L10 8.800z" fill="#f21cc0"/><path d="M10.300 9.800L12.800 9L14 13.500L11.500 14.300z" fill="#f79a20"/><path d="M13 1.500L15.500 1L20 15L17.500 16z" fill="#8c9cb2"/><path d="M14.200 4L15.700 3.500L17.700 10L16.200 10.500z" fill="#4a80ca"/></svg>
<div class="t gt" style="left:707px;top:257px;letter-spacing:-0.264px">Liens Vari-Art. / Req. : ...</div>
<div class="abs grid"></div>
<div class="abs gh" style="left:470px;width:161px">Vari-Article</div>
<div class="abs gh" style="left:631px;width:261px">Désignation</div>
<div class="abs gh" style="left:892px;width:141px">Ini. Variantes (RV1)</div>
<div class="abs gh" style="left:1033px;width:132px">Ini. Variables (RV2)</div>
<div class="abs gh" style="left:1165px;width:10px;border-right:none"></div>
<div class="abs row" style="top:309px">
<div class="c" style="left:0px;width:161px">ISTMENDOR</div>
<div class="c c1" style="left:161px;width:261px">Meneau Dormant</div>
<div class="c" style="left:422px;width:141px"></div>
<div class="c" style="left:563px;width:132px"></div>
<div class="c" style="left:695px;width:10px;border-right:none"></div>
</div>
<div class="abs row g" style="top:329px">
<div class="c" style="left:0px;width:161px">ISTMENDOR_PRF</div>
<div class="c c1" style="left:161px;width:261px">Meneau Profil Dormant</div>
<div class="c" style="left:422px;width:141px"></div>
<div class="c" style="left:563px;width:132px"></div>
<div class="c" style="left:695px;width:10px;border-right:none"></div>
</div>
<div class="abs row" style="top:349px">
<div class="c" style="left:0px;width:161px">ISTMENDOR_RENF</div>
<div class="c c1" style="left:161px;width:261px">Meneau Renfort Dormant</div>
<div class="c" style="left:422px;width:141px"></div>
<div class="c" style="left:563px;width:132px"></div>
<div class="c" style="left:695px;width:10px;border-right:none"></div>
</div>
<div class="abs row g" style="top:369px">
<div class="c" style="left:0px;width:161px">ISTMENOUV</div>
<div class="c c1" style="left:161px;width:261px">Meneau Ouvrant</div>
<div class="c" style="left:422px;width:141px"></div>
<div class="c" style="left:563px;width:132px"></div>
<div class="c" style="left:695px;width:10px;border-right:none"></div>
</div>
<div class="abs row" style="top:389px">
<div class="c" style="left:0px;width:161px">ISTMENOUV_PRF</div>
<div class="c c1" style="left:161px;width:261px">Meneau Profil Ouvrant</div>
<div class="c" style="left:422px;width:141px"></div>
<div class="c" style="left:563px;width:132px"></div>
<div class="c" style="left:695px;width:10px;border-right:none"></div>
</div>
<div class="abs row g" style="top:409px">
<div class="c" style="left:0px;width:161px">ISTMENOUV_RENF</div>
<div class="c c1" style="left:161px;width:261px">Meneau Renfort Ouvrant</div>
<div class="c" style="left:422px;width:141px"></div>
<div class="c" style="left:563px;width:132px"></div>
<div class="c" style="left:695px;width:10px;border-right:none"></div>
</div>
<div class="abs row sel" style="top:429px">
<div class="abs" style="left:0;top:0;width:344px;height:18px;background:#b39cef"></div>
<div class="c" style="left:0px;width:161px">ISTMENUISERIE</div>
<div class="c c1" style="left:161px;width:261px">Menuiserie</div>
<div class="c" style="left:422px;width:141px"></div>
<div class="c" style="left:563px;width:132px"></div>
<div class="c" style="left:695px;width:10px;border-right:none">F</div>
</div>
<div class="abs row g" style="top:449px">
<div class="c" style="left:0px;width:161px">ISTMONDORD</div>
<div class="c c1" style="left:161px;width:261px">Montant Dormant Droit</div>
<div class="c" style="left:422px;width:141px"></div>
<div class="c" style="left:563px;width:132px"></div>
<div class="c" style="left:695px;width:10px;border-right:none"></div>
</div>
<div class="abs row" style="top:469px">
<div class="c" style="left:0px;width:161px">ISTMONDORD_PRF</div>
<div class="c c1" style="left:161px;width:261px">Montant Dormant Droit Profil</div>
<div class="c" style="left:422px;width:141px"></div>
<div class="c" style="left:563px;width:132px"></div>
<div class="c" style="left:695px;width:10px;border-right:none"></div>
</div>
<div class="abs row g" style="top:489px">
<div class="c" style="left:0px;width:161px">ISTMONDORD_RENF</div>
<div class="c c1" style="left:161px;width:261px">Renfort Dormant Droit Profil</div>
<div class="c" style="left:422px;width:141px"></div>
<div class="c" style="left:563px;width:132px"></div>
<div class="c" style="left:695px;width:10px;border-right:none"></div>
</div>
<div class="abs row" style="top:509px">
<div class="c" style="left:0px;width:161px">ISTMONDORG</div>
<div class="c c1" style="left:161px;width:261px">Montant Dormant Gauche</div>
<div class="c" style="left:422px;width:141px"></div>
<div class="c" style="left:563px;width:132px"></div>
<div class="c" style="left:695px;width:10px;border-right:none"></div>
</div>
<div class="abs row g" style="top:529px">
<div class="c" style="left:0px;width:161px">ISTMONDORG_PRF</div>
<div class="c c1" style="left:161px;width:261px">Montant Dormant Gauche Profil</div>
<div class="c" style="left:422px;width:141px"></div>
<div class="c" style="left:563px;width:132px"></div>
<div class="c" style="left:695px;width:10px;border-right:none"></div>
</div>
<div class="abs row" style="top:549px">
<div class="c" style="left:0px;width:161px">ISTMONDORG_RENF</div>
<div class="c c1" style="left:161px;width:261px">Renfort Gauche Profil Dormant</div>
<div class="c" style="left:422px;width:141px"></div>
<div class="c" style="left:563px;width:132px"></div>
<div class="c" style="left:695px;width:10px;border-right:none"></div>
</div>
<div class="abs row g" style="top:569px">
<div class="c" style="left:0px;width:161px">ISTMONOUVD</div>
<div class="c c1" style="left:161px;width:261px">Montant Ouvrant Droit</div>
<div class="c" style="left:422px;width:141px"></div>
<div class="c" style="left:563px;width:132px"></div>
<div class="c" style="left:695px;width:10px;border-right:none"></div>
</div>
<div class="abs row" style="top:589px">
<div class="c" style="left:0px;width:161px">ISTMONOUVD_PRF</div>
<div class="c c1" style="left:161px;width:261px">Montant Ouvrant Droit Profil</div>
<div class="c" style="left:422px;width:141px"></div>
<div class="c" style="left:563px;width:132px"></div>
<div class="c" style="left:695px;width:10px;border-right:none"></div>
</div>
<div class="abs row g" style="top:609px">
<div class="c" style="left:0px;width:161px">ISTMONOUVD_RENF</div>
<div class="c c1" style="left:161px;width:261px">Renfort Ouvrant Droit Profil</div>
<div class="c" style="left:422px;width:141px"></div>
<div class="c" style="left:563px;width:132px"></div>
<div class="c" style="left:695px;width:10px;border-right:none"></div>
</div>
<div class="abs row" style="top:629px">
<div class="c" style="left:0px;width:161px">ISTMONOUVG</div>
<div class="c c1" style="left:161px;width:261px">Montant Ouvrant Gauche</div>
<div class="c" style="left:422px;width:141px"></div>
<div class="c" style="left:563px;width:132px"></div>
<div class="c" style="left:695px;width:10px;border-right:none"></div>
</div>
<div class="abs row g" style="top:649px">
<div class="c" style="left:0px;width:161px">ISTMONOUVG_PRF</div>
<div class="c c1" style="left:161px;width:261px">Montant Ouvrant Gauche Profil</div>
<div class="c" style="left:422px;width:141px"></div>
<div class="c" style="left:563px;width:132px"></div>
<div class="c" style="left:695px;width:10px;border-right:none"></div>
</div>
<div class="abs row" style="top:669px">
<div class="c" style="left:0px;width:161px">ISTMONOUVG_RENF</div>
<div class="c c1" style="left:161px;width:261px">Renfort Gauche Profil Ouvrant</div>
<div class="c" style="left:422px;width:141px"></div>
<div class="c" style="left:563px;width:132px"></div>
<div class="c" style="left:695px;width:10px;border-right:none"></div>
</div>
<div class="abs row g" style="top:689px">
<div class="c" style="left:0px;width:161px">ISTNONAFFECTEE</div>
<div class="c c1" style="left:161px;width:261px">Composant BOM Non Affecté</div>
<div class="c" style="left:422px;width:141px"></div>
<div class="c" style="left:563px;width:132px"></div>
<div class="c" style="left:695px;width:10px;border-right:none"></div>
</div>
<div class="abs row" style="top:709px">
<div class="c" style="left:0px;width:161px">ISTPANNEAU</div>
<div class="c c1" style="left:161px;width:261px">Panneau</div>
<div class="c" style="left:422px;width:141px"></div>
<div class="c" style="left:563px;width:132px"></div>
<div class="c" style="left:695px;width:10px;border-right:none"></div>
</div>
<div class="abs row g" style="top:729px">
<div class="c" style="left:0px;width:161px">ISTPARCLOSE_MOND</div>
<div class="c c1" style="left:161px;width:261px">Parclose Montant Droit</div>
<div class="c" style="left:422px;width:141px"></div>
<div class="c" style="left:563px;width:132px"></div>
<div class="c" style="left:695px;width:10px;border-right:none"></div>
</div>
<div class="abs row" style="top:749px">
<div class="c" style="left:0px;width:161px">ISTPARCLOSE_MOND_P</div>
<div class="c c1" style="left:161px;width:261px">Profil Parclose Montant Droit</div>
<div class="c" style="left:422px;width:141px"></div>
<div class="c" style="left:563px;width:132px"></div>
<div class="c" style="left:695px;width:10px;border-right:none"></div>
</div>
<div class="abs row g" style="top:769px">
<div class="c" style="left:0px;width:161px">ISTPARCLOSE_MONG</div>
<div class="c c1" style="left:161px;width:261px">Parclose Montant Gauche</div>
<div class="c" style="left:422px;width:141px"></div>
<div class="c" style="left:563px;width:132px"></div>
<div class="c" style="left:695px;width:10px;border-right:none"></div>
</div>
<div class="abs row" style="top:789px">
<div class="c" style="left:0px;width:161px">ISTPARCLOSE_MONG_P</div>
<div class="c c1" style="left:161px;width:261px">Profil Parclose Montant Gauche</div>
<div class="c" style="left:422px;width:141px"></div>
<div class="c" style="left:563px;width:132px"></div>
<div class="c" style="left:695px;width:10px;border-right:none"></div>
</div>
<div class="abs row g" style="top:809px">
<div class="c" style="left:0px;width:161px">ISTPARCLOSE_TRAVB</div>
<div class="c c1" style="left:161px;width:261px">Parclose Traverse Basse</div>
<div class="c" style="left:422px;width:141px"></div>
<div class="c" style="left:563px;width:132px"></div>
<div class="c" style="left:695px;width:10px;border-right:none"></div>
</div>
<div class="abs row" style="top:829px">
<div class="c" style="left:0px;width:161px">ISTPARCLOSE_TRAVH</div>
<div class="c c1" style="left:161px;width:261px">Parclose Traverse Haute</div>
<div class="c" style="left:422px;width:141px"></div>
<div class="c" style="left:563px;width:132px"></div>
<div class="c" style="left:695px;width:10px;border-right:none"></div>
</div>
<div class="abs vsb"></div>
<div class="abs" style="left:1175px;top:287px;width:20px;height:19px;background:linear-gradient(90deg,#d8e5f8 50%,#c0d6f4 50%);border:1px solid #e4eefb;border-bottom-color:#9fbbe4"></div>
<svg class="ico" style="left:1179.500px;top:292.500px" width="11.500" height="6.600" viewBox="0 0 11.500 6.600"><path d="M0 6.600L5.750 0L11.500 6.600z" fill="#3b4a6b"/></svg>
<div class="abs" style="left:1175px;top:575px;width:20px;height:63px;background:linear-gradient(90deg,#dae6f8 48%,#c1d6f4 48%);border:1px solid #566ea6;border-radius:2px;box-shadow:inset 0 0 0 1px #e2ecfa"></div>
<div class="abs rp"></div>
<div class="abs" style="left:1204px;top:313px;width:630px;height:517px;border-left:1px solid #8f8f8f;box-shadow:inset 1px 0 0 #fff"></div><div class="abs" style="left:1308px;top:313px;width:526px;height:2px;border-top:1px solid #8f8f8f;background:#fff"></div>
<svg class="ico" style="left:1200px;top:285px" width="120" height="32" viewBox="1200 285 120 32"><defs><linearGradient id="tg" x1="0" y1="0" x2="0" y2="1"><stop offset="0" stop-color="#fefefe"/><stop offset="1" stop-color="#f0f0f0"/></linearGradient></defs><path d="M1210.300 314.500L1222.500 293Q1224.400 289.700 1228 289.700H1289.500Q1293 289.700 1294.800 292.700L1308.500 314.500z" fill="url(#tg)"/><path d="M1204.500 313.500H1210.800L1222.500 293Q1224.400 289.700 1228 289.700H1289.500Q1293 289.700 1294.800 292.700L1308 313.500" fill="none" stroke="#8f8f8f" stroke-width="1"/></svg>
<div class="t" style="left:1226px;top:292.900px;font-weight:bold;font-size:15px;color:#111;letter-spacing:-0.317px">Définition</div>
<div class="t fl" style="right:508px;top:322.7px">Vari-Article</div>
<div class="t fl" style="left:1345px;top:322.7px">ISTMENUISERIE</div>
<div class="t fl" style="right:508px;top:346.7px">Etat</div>
<div class="t fl" style="left:1345px;top:346.7px">V</div>
<div class="t fl" style="right:508px;top:370.7px">Désignation</div>
<div class="t fl" style="left:1345px;top:370.7px">Menuiserie</div>
<div class="abs" style="left:1218px;top:394px;width:620px;height:18px;background:#e1e1e1;border:1px solid #a8a8a8;"></div>
<div class="t fl" style="left:1551.300px;top:396.600px;transform:translateX(-50%)">Requêtes</div>
<div class="abs" style="left:1210px;top:496px;width:198px;height:28px;background:#f09af0"></div>
<div class="t fl" style="right:508px;top:422.9px">Ini. Variantes (RV1)</div>
<div class="t fl" style="right:508px;top:455.09999999999997px">Ini. Variables (RV2)</div>
<div class="t fl" style="right:508px;top:478.8px">Ini. Nomen. (RV3)</div>
<div class="t fl" style="left:1345px;top:478.8px">RV3</div>
<div class="t fl" style="left:1218.500px;width:108.300px;overflow:hidden;top:502.7px;height:16px">Choix Gam. (RVG)</div>
<div class="t fl" style="left:1345px;top:502.7px">RVG</div>
<div class="abs" style="left:1343px;top:417px;width:30px;height:30px;background:#cdcdcd;border:1px solid #dadada"></div>
<svg class="ico" style="left:1346px;top:420px" width="24" height="24" viewBox="0 0 24 24"><path d="M4 15l5-9 9-2-3 10-4 5-6 1z" fill="#b9b9b9"/><path d="M7 14l4-7M10 15l4-8M13 15l3-8" stroke="#e8e8e8" stroke-width="1.300"/><path d="M3 17.500h9" stroke="#ababab" stroke-width="1.600"/><path d="M11 4.500h7" stroke="#b0b0b0" stroke-width="1.600"/></svg>
<div class="abs q" style="top:452px">?</div>
<div class="abs q" style="top:476px">?</div>
<div class="t fl" style="left:1624.300px;top:478.8px;letter-spacing:-0.353px">Laquage</div>
<div class="abs q" style="top:500px">?</div>
<div class="t fl" style="left:1624.300px;top:502.7px;letter-spacing:-0.465px">Recherche Gamme Générique</div>
<div class="abs red" style="left:321.90000000000003px;top:478.8px;width:29.4px;height:29.4px;line-height:29.4px">1</div>
<div class="abs red" style="left:440.8px;top:420.90000000000003px;width:29.4px;height:29.4px;line-height:29.4px">2</div>
<div class="abs red" style="left:1190.3999999999999px;top:489.0px;width:29.4px;height:29.4px;line-height:29.4px">3</div>
<svg class="ico" style="left:610px;top:440px" width="20" height="26" viewBox="610 440 20 26"><path d="M613.500 443.400L613.500 459.900L617.200 456.400L619.900 462.200L622.400 461L619.800 455.300L624.800 455.300Z" fill="#fff" stroke="#0a0a14" stroke-width="1" stroke-linejoin="round"/></svg>
</div>
</body></html>
